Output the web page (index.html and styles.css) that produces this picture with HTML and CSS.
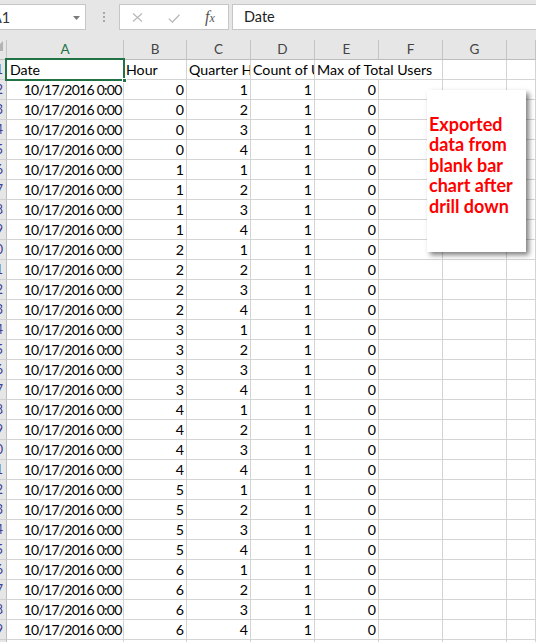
FILE: index.html
```html
<!DOCTYPE html>
<html>
<head>
<meta charset="utf-8">
<title>Sheet</title>
<link rel="stylesheet" href="styles.css">
</head>
<body>
<div class="fbar">
  <div class="namebox"><span class="nb-text">A1</span><svg class="dd" width="7" height="4" viewBox="0 0 7 4"><path d="M0 0h7l-3.5 4z" fill="#7a7a7a"/></svg></div>
  <div class="dots"><i></i><i></i><i></i></div>
  <div class="fbtns">
    <svg class="ic-x" width="11" height="9" viewBox="0 0 11 9"><path d="M1 0.5l9 8M10 0.5l-9 8" stroke="#b8b8b8" stroke-width="1.2" fill="none"/></svg>
    <svg class="ic-ok" width="12" height="9" viewBox="0 0 12 9"><path d="M0.8 4.6l3.6 3.6L11.4 0.8" stroke="#b8b8b8" stroke-width="1.3" fill="none"/></svg>
    <span class="fx"><i>f</i><span class="fxx">x</span></span>
  </div>
  <div class="finput">Date</div>
</div>

<div class="sheet">
  <div class="row hdr"><span class="corner"></span><span class="sel">A</span><span>B</span><span>C</span><span>D</span><span>E</span><span>F</span><span>G</span><span></span></div>
  <div class="row first"><b>1</b><span class="l a1">Date<i class="handle"></i></span><span class="l">Hour</span><span class="l">Quarter Hour</span><span class="l">Count of Users</span><span class="l span2">Max of Total Users</span><span></span><span></span></div>
  <div class="row"><b>2</b><span>10/17/2016 0:00</span><span>0</span><span>1</span><span>1</span><span>0</span><span></span><span></span><span></span></div>
  <div class="row"><b>3</b><span>10/17/2016 0:00</span><span>0</span><span>2</span><span>1</span><span>0</span><span></span><span></span><span></span></div>
  <div class="row"><b>4</b><span>10/17/2016 0:00</span><span>0</span><span>3</span><span>1</span><span>0</span><span></span><span></span><span></span></div>
  <div class="row"><b>5</b><span>10/17/2016 0:00</span><span>0</span><span>4</span><span>1</span><span>0</span><span></span><span></span><span></span></div>
  <div class="row"><b>6</b><span>10/17/2016 0:00</span><span>1</span><span>1</span><span>1</span><span>0</span><span></span><span></span><span></span></div>
  <div class="row"><b>7</b><span>10/17/2016 0:00</span><span>1</span><span>2</span><span>1</span><span>0</span><span></span><span></span><span></span></div>
  <div class="row"><b>8</b><span>10/17/2016 0:00</span><span>1</span><span>3</span><span>1</span><span>0</span><span></span><span></span><span></span></div>
  <div class="row"><b>9</b><span>10/17/2016 0:00</span><span>1</span><span>4</span><span>1</span><span>0</span><span></span><span></span><span></span></div>
  <div class="row"><b>10</b><span>10/17/2016 0:00</span><span>2</span><span>1</span><span>1</span><span>0</span><span></span><span></span><span></span></div>
  <div class="row"><b>11</b><span>10/17/2016 0:00</span><span>2</span><span>2</span><span>1</span><span>0</span><span></span><span></span><span></span></div>
  <div class="row"><b>12</b><span>10/17/2016 0:00</span><span>2</span><span>3</span><span>1</span><span>0</span><span></span><span></span><span></span></div>
  <div class="row"><b>13</b><span>10/17/2016 0:00</span><span>2</span><span>4</span><span>1</span><span>0</span><span></span><span></span><span></span></div>
  <div class="row"><b>14</b><span>10/17/2016 0:00</span><span>3</span><span>1</span><span>1</span><span>0</span><span></span><span></span><span></span></div>
  <div class="row"><b>15</b><span>10/17/2016 0:00</span><span>3</span><span>2</span><span>1</span><span>0</span><span></span><span></span><span></span></div>
  <div class="row"><b>16</b><span>10/17/2016 0:00</span><span>3</span><span>3</span><span>1</span><span>0</span><span></span><span></span><span></span></div>
  <div class="row"><b>17</b><span>10/17/2016 0:00</span><span>3</span><span>4</span><span>1</span><span>0</span><span></span><span></span><span></span></div>
  <div class="row"><b>18</b><span>10/17/2016 0:00</span><span>4</span><span>1</span><span>1</span><span>0</span><span></span><span></span><span></span></div>
  <div class="row"><b>19</b><span>10/17/2016 0:00</span><span>4</span><span>2</span><span>1</span><span>0</span><span></span><span></span><span></span></div>
  <div class="row"><b>20</b><span>10/17/2016 0:00</span><span>4</span><span>3</span><span>1</span><span>0</span><span></span><span></span><span></span></div>
  <div class="row"><b>21</b><span>10/17/2016 0:00</span><span>4</span><span>4</span><span>1</span><span>0</span><span></span><span></span><span></span></div>
  <div class="row"><b>22</b><span>10/17/2016 0:00</span><span>5</span><span>1</span><span>1</span><span>0</span><span></span><span></span><span></span></div>
  <div class="row"><b>23</b><span>10/17/2016 0:00</span><span>5</span><span>2</span><span>1</span><span>0</span><span></span><span></span><span></span></div>
  <div class="row"><b>24</b><span>10/17/2016 0:00</span><span>5</span><span>3</span><span>1</span><span>0</span><span></span><span></span><span></span></div>
  <div class="row"><b>25</b><span>10/17/2016 0:00</span><span>5</span><span>4</span><span>1</span><span>0</span><span></span><span></span><span></span></div>
  <div class="row"><b>26</b><span>10/17/2016 0:00</span><span>6</span><span>1</span><span>1</span><span>0</span><span></span><span></span><span></span></div>
  <div class="row"><b>27</b><span>10/17/2016 0:00</span><span>6</span><span>2</span><span>1</span><span>0</span><span></span><span></span><span></span></div>
  <div class="row"><b>28</b><span>10/17/2016 0:00</span><span>6</span><span>3</span><span>1</span><span>0</span><span></span><span></span><span></span></div>
  <div class="row"><b>29</b><span>10/17/2016 0:00</span><span>6</span><span>4</span><span>1</span><span>0</span><span></span><span></span><span></span></div>
  <div class="row"><b>30</b><span></span><span></span><span></span><span></span><span></span><span></span><span></span><span></span></div>
</div>

<div class="note">Exported data from blank bar chart after drill down</div>
</body>
</html>
```

FILE: styles.css
```css
* { box-sizing: border-box; }
html, body { margin: 0; padding: 0; }
body {
  width: 536px;
  height: 642px;
  overflow: hidden;
  position: relative;
  background: #ffffff;
  font-family: Lato, "Liberation Sans", sans-serif;
  color: #000;
}

/* formula bar */
.fbar {
  height: 40px;
  background: #e6e6e6;
  display: flex;
  align-items: flex-start;
  padding-top: 4px;
}
.namebox {
  margin-left: -1px;
  width: 87px;
  height: 26px;
  background: #fff;
  border: 1px solid #c6c6c6;
  display: flex;
  align-items: center;
  justify-content: space-between;
  padding-right: 5px;
  overflow: hidden;
}
.nb-text {
  margin-left: -8px;
  font-size: 14.5px;
  color: #333;
  font-family: Lato, sans-serif;
}
.dd { margin-top: 1px; }
.dots {
  width: 33px;
  height: 26px;
  display: flex;
  flex-direction: column;
  align-items: center;
  justify-content: center;
  gap: 2px;
  padding-left: 2px;
}
.dots i {
  display: block;
  width: 2px;
  height: 2px;
  background: #a8a8a8;
}
.fbtns {
  width: 110px;
  height: 26px;
  background: #fff;
  border: 1px solid #c6c6c6;
  display: flex;
  align-items: center;
  padding-left: 12px;
}
.ic-x { margin-top: 1px; }
.ic-ok { margin-left: 25px; margin-top: 2px; }
.fx {
  margin-left: 25px;
  font-family: "Liberation Serif", serif;
  color: #555;
  font-size: 16px;
  line-height: 1;
}
.fx i { font-style: italic; }
.fxx { font-style: italic; font-size: 12px; }
.finput {
  margin-left: 3px;
  margin-right: -2px;
  flex: 1;
  height: 26px;
  background: #fff;
  border: 1px solid #c6c6c6;
  padding-left: 11px;
  font-size: 14.5px;
  line-height: 24px;
  color: #222;
}

/* sheet */
.row {
  display: grid;
  grid-template-columns: 7px 117px 63px 64px 64px 64px 64px 64px 29px;
  height: 20px;
}
.row > * {
  border-right: 1px solid #d4d4d4;
  border-bottom: 1px solid #d4d4d4;
  font-size: 14.2px;
  line-height: 19px;
  white-space: nowrap;
  overflow: hidden;
  text-align: right;
  padding: 0 2px 0 2px;
  position: relative;
}
.row:not(.hdr):not(.first) > :nth-child(2) {
  font-size: 14px;
  letter-spacing: -0.75px;
  padding-right: 1.5px;
}
.row > b {
  font-weight: normal;
  background: #e6e6e6;
  border-right: 1px solid #bdbdbd;
  border-bottom: 1px solid #cfcfcf;
  color: #3c3f96;
  font-size: 13px;
  padding: 0 3px 0 0;
  display: flex;
  justify-content: flex-end;
}
.row > .l { text-align: left; }
.row > .span2 { grid-column: span 2; overflow: visible; }
.a1 { padding-left: 3px; overflow: visible !important; }
.a1::before {
  content: "";
  position: absolute;
  left: -2px;
  top: -2px;
  right: -2px;
  bottom: -2px;
  border: 2px solid #217346;
  z-index: 2;
}
.handle {
  position: absolute;
  right: -4px;
  bottom: -4px;
  width: 5px;
  height: 5px;
  background: #217346;
  border: 1px solid #fff;
  z-index: 3;
}

.hdr > * {
  background: #e6e6e6;
  border-right: 1px solid #c4c4c4;
  border-bottom: 1px solid #bcbcbc;
  text-align: center;
  color: #444;
  font-family: Lato, sans-serif;
  font-size: 13.5px;
  line-height: 19px;
  padding: 0;
}
.hdr > .sel { color: #217346; }
.hdr > .corner { border-right: 1px solid #c4c4c4; }
.corner::after {
  content: "";
  position: absolute;
  right: 3px;
  bottom: 8px;
  width: 0;
  height: 0;
  border-left: 10px solid transparent;
  border-bottom: 10px solid #b4b4b4;
}

/* callout */
.note {
  position: absolute;
  left: 427px;
  top: 90px;
  width: 99px;
  height: 162px;
  background: #fff;
  box-shadow: 3px 3px 5px rgba(0, 0, 0, 0.5);
  padding: 23.5px 0 0 2px;
  color: #ff0000;
  font-family: Lato, sans-serif;
  font-weight: bold;
  font-size: 18px;
  line-height: 20.5px;
  z-index: 5;
}
```
